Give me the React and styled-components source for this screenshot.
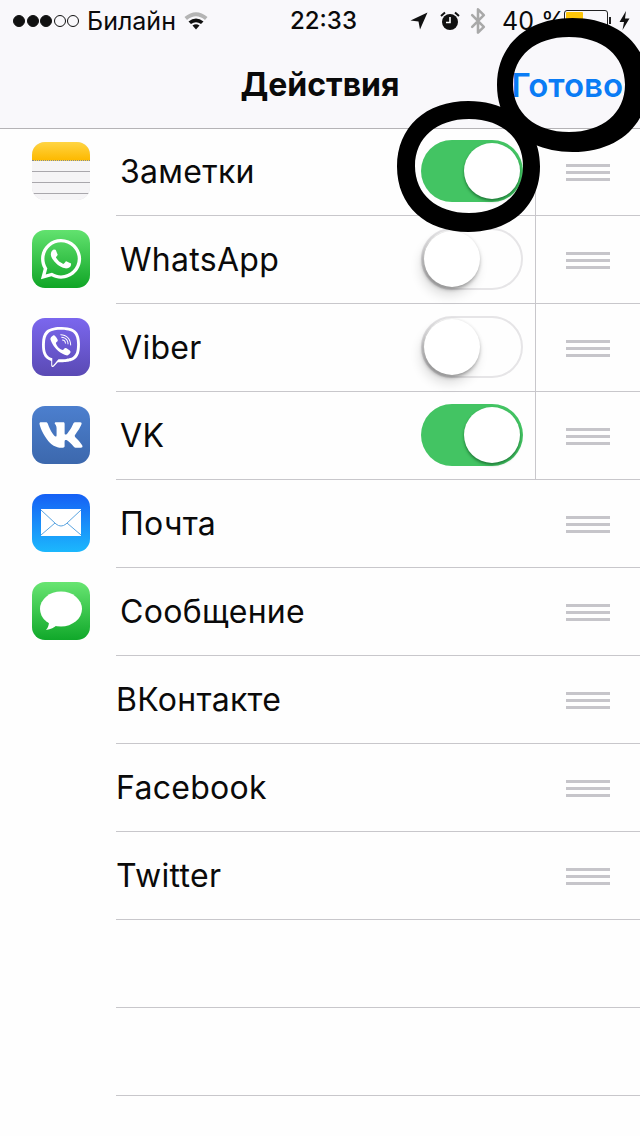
import React from "react";
import styled, { createGlobalStyle } from "styled-components";
import { FaWhatsapp, FaViber, FaVk } from "react-icons/fa";
import { Bluetooth } from "lucide-react";

const Global = createGlobalStyle`
  html, body { margin: 0; padding: 0; background: #fefefe; }
  body { font-family: Inter, "Liberation Sans", sans-serif; color: #0a0a0a; }
`;

const Page = styled.div`
  position: relative;
  width: 640px;
  height: 1136px;
  overflow: hidden;
  background: #fefefe;
`;

const Header = styled.header`
  height: 129px;
  box-sizing: border-box;
  background: #f9f8fb;
  border-bottom: 1px solid #b5b3b6;
  display: flex;
  flex-direction: column;
`;

const StatusBar = styled.div`
  height: 41px;
  display: flex;
  align-items: center;
  position: relative;
  font-size: 25px;
  letter-spacing: 0;
`;

const Dots = styled.div`
  display: flex;
  gap: 1.5px;
  margin-left: 13px;
  margin-top: 1px;
`;

const Dot = styled.span`
  width: 12px;
  height: 12px;
  border-radius: 50%;
  box-sizing: border-box;
  border: 1px solid #111;
  background: ${(p) => (p.$on ? "#111" : "transparent")};
`;

const Carrier = styled.span`
  margin-left: 8px;
  width: 85px;
  white-space: nowrap;
`;

const Glyph = styled.svg`
  flex: none;
  display: block;
  margin-left: ${(p) => p.$ml || 0}px;
`;

const Clock = styled.span`
  margin-left: 82px;
  width: 120px;
  font-weight: 500;
  white-space: nowrap;
  font-size: 24px;
`;

const Percent = styled.span`
  margin-left: 10px;
  width: 62px;
  white-space: nowrap;
`;

const Battery = styled.div`
  position: relative;
  width: 44px;
  height: 21px;
  box-sizing: border-box;
  border: 1px solid #222;
  border-radius: 3px;
  padding: 1px;
  flex: none;
`;

const BatteryFill = styled.div`
  width: 17px;
  height: 100%;
  background: #fdc60a;
  border-radius: 1px;
`;

const NavBar = styled.div`
  flex: 1;
  display: grid;
  grid-template-columns: 1fr auto 1fr;
  align-items: center;
`;

const Title = styled.h1`
  grid-column: 2;
  margin: 0;
  font-size: 32px;
  font-weight: 700;
  letter-spacing: 0;
`;

const Done = styled.button`
  justify-self: end;
  margin-right: 17px;
  padding: 0;
  border: 0;
  background: none;
  color: #0a7cf5;
  font: 600 33px Inter, "Liberation Sans", sans-serif;
`;

const List = styled.ul`
  list-style: none;
  margin: -1px 0 0;
  padding: 0;
`;

const Item = styled.li`
  height: 88px;
  box-sizing: border-box;
  display: flex;
  align-items: stretch;
`;

const IconCell = styled.div`
  width: 116px;
  flex: none;
  display: flex;
  align-items: center;
  padding-left: 32px;
  box-sizing: border-box;
  padding-bottom: 3px;
`;

const Body = styled.div`
  flex: 1;
  display: flex;
  align-items: stretch;
  border-bottom: 1px solid #c8c7cb;
`;

const Main = styled.div`
  flex: 1;
  display: flex;
  align-items: center;
  justify-content: space-between;
  padding-left: ${(p) => (p.$hasIcon ? 5 : 1)}px;
  padding-right: 12px;
  padding-bottom: 2px;
`;

const Label = styled.span`
  font-size: 32px;
  letter-spacing: 0.3px;
  margin-left: -1px;
  margin-top: 2px;
`;

const Grip = styled.div`
  width: 105px;
  flex: none;
  box-sizing: border-box;
  border-left: 1px solid ${(p) => (p.$divided ? "#c8c7cb" : "transparent")};
  display: flex;
  flex-direction: column;
  justify-content: center;
  gap: 4px;
  padding-left: 30px;
  padding-top: 1px;
`;

const GripBar = styled.span`
  width: 44px;
  height: 3px;
  background: #c6c5ca;
`;

const Switch = styled.div`
  width: 102px;
  height: 62px;
  box-sizing: border-box;
  border-radius: 31px;
  position: relative;
  background: ${(p) => (p.$on ? "#43c463" : "#fefefe")};
  border: ${(p) => (p.$on ? "none" : "2px solid #e6e5e7")};
`;

const Knob = styled.div`
  position: absolute;
  top: ${(p) => (p.$on ? 3 : 1)}px;
  left: ${(p) => (p.$on ? 43 : 1)}px;
  width: 56px;
  height: 56px;
  border-radius: 50%;
  background: #fff;
  box-shadow: ${(p) =>
    p.$on
      ? "0 2px 3px rgba(0,60,20,.55)"
      : "-1px 2px 4px rgba(0,0,0,.4), -3px 8px 12px rgba(0,0,0,.14)"};
`;

const AppTile = styled.div`
  width: 58px;
  height: 58px;
  border-radius: 13px;
  overflow: hidden;
  background: ${(p) => p.$bg};
  display: flex;
  align-items: center;
  justify-content: center;
  color: #fff;
`;

const NotesTop = styled.div`
  height: 18px;
  background: linear-gradient(#ffd544, #fdb900);
  border-bottom: 1px dotted #888;
`;

const NotesPaper = styled.div`
  height: 39px;
  background: repeating-linear-gradient(#f5f4f6 0, #f5f4f6 10px, #a9a7ac 10px, #a9a7ac 11px);
`;

const NotesTile = styled(AppTile)`
  display: block;
  box-shadow: inset 0 0 0 1px #e3e2e5;
  background: #f5f4f6;
`;

const Overlay = styled.svg`
  position: absolute;
  left: 0;
  top: 0;
  pointer-events: none;
`;

const NotesIcon = () => (
  <NotesTile>
    <NotesTop />
    <NotesPaper />
  </NotesTile>
);

const WhatsAppIcon = () => (
  <AppTile $bg="linear-gradient(#62e26f,#10a526)">
    <FaWhatsapp size={46} />
  </AppTile>
);

const ViberIcon = () => (
  <AppTile $bg="linear-gradient(#7b67ee,#5a4ab4)">
    <FaViber size={40} />
  </AppTile>
);

const VkIcon = () => (
  <AppTile $bg="linear-gradient(#4c7fce,#3c68ad)">
    <FaVk size={46} />
  </AppTile>
);

const MailIcon = () => (
  <AppTile $bg="linear-gradient(#1560f5,#1cb8fd)">
    <svg width="40" height="27" viewBox="0 0 40 27">
      <rect width="40" height="27" fill="#fff" />
      <path
        d="M0 1 L15 15 Q20 19 25 15 L40 1 M0 26 L14 14 M40 26 L26 14"
        fill="none"
        stroke="#5aa4e0"
        strokeWidth="1"
      />
    </svg>
  </AppTile>
);

const MessagesIcon = () => (
  <AppTile $bg="linear-gradient(#68e572,#10a82a)">
    <svg width="44" height="40" viewBox="0 0 44 40">
      <ellipse cx="22" cy="18" rx="21" ry="17.5" fill="#fff" />
      <path d="M10 30 Q10 36 7 39 Q14 38 18 34 Z" fill="#fff" />
    </svg>
  </AppTile>
);

const Signal = () => (
  <Dots>
    {[1, 1, 1, 0, 0].map((on, i) => (
      <Dot key={i} $on={!!on} />
    ))}
  </Dots>
);

const Wifi = () => (
  <Glyph $ml={12} width="24" height="19" viewBox="0 0 24 19">
    <path d="M0.5 6 Q12 -3.5 23.5 6 L21 9 Q12 1.5 3 9 Z" fill="#b4b4b4" />
    <path d="M4.5 10.5 Q12 4.5 19.5 10.5 L17 13 Q12 9.5 7 13 Z" fill="#111" />
    <path d="M8.5 14.5 Q12 12 15.5 14.5 L12 18.5 Z" fill="#111" />
  </Glyph>
);

const Arrow = () => (
  <Glyph width="18" height="18" viewBox="0 0 18 18">
    <path d="M0.5 8.5 L17.5 0.5 L10 17.5 L8.5 9.5 Z" fill="#111" />
  </Glyph>
);

const Alarm = () => (
  <Glyph $ml={12} width="20" height="20" viewBox="0 0 20 20">
    <circle cx="10" cy="11" r="8" fill="#111" />
    <path d="M10 6 V11.5 H6" fill="none" stroke="#fff" strokeWidth="1.6" />
    <path d="M1 5 L5 1.5 M19 5 L15 1.5" stroke="#111" strokeWidth="2" />
  </Glyph>
);

const Bolt = () => (
  <Glyph width="11" height="19" viewBox="0 0 11 19" $ml={8}>
    <path d="M7 0 L0.5 11 H5 L3.5 19 L10.5 7.5 H6 Z" fill="#111" />
  </Glyph>
);

const BatteryTip = styled.span`
  flex: none;
  width: 2px;
  height: 7px;
  margin-left: 1px;
  background: #222;
`;

const BtIcon = styled(Bluetooth)`
  flex: none;
  margin-left: 4px;
  color: #a9a9a9;
`;

const apps = [
  { name: "Заметки", icon: <NotesIcon />, toggle: true },
  { name: "WhatsApp", icon: <WhatsAppIcon />, toggle: false },
  { name: "Viber", icon: <ViberIcon />, toggle: false },
  { name: "VK", icon: <VkIcon />, toggle: true },
  { name: "Почта", icon: <MailIcon /> },
  { name: "Сообщение", icon: <MessagesIcon /> },
  { name: "ВКонтакте" },
  { name: "Facebook" },
  { name: "Twitter" },
  {},
  {},
];

const blob = (l, t, r, b) => {
  const cx = (l + r) / 2;
  const cy = (t + b) / 2;
  const kx = ((r - l) / 2) * 0.6;
  const ky = ((b - t) / 2) * 0.6;
  return `M${l} ${cy} C${l} ${cy - ky} ${cx - kx} ${t} ${cx} ${t} C${cx + kx} ${t} ${r} ${cy - ky} ${r} ${cy} C${r} ${cy + ky} ${cx + kx} ${b} ${cx} ${b} C${cx - kx} ${b} ${l} ${cy + ky} ${l} ${cy} Z`;
};

export default function App() {
  return (
    <Page>
      <Global />
      <Header>
        <StatusBar>
          <Signal />
          <Carrier>Билайн</Carrier>
          <Wifi />
          <Clock>22:33</Clock>
          <Arrow />
          <Alarm />
          <BtIcon size={28} strokeWidth={2.2} />
          <Percent>40 %</Percent>
          <Battery>
            <BatteryFill />
          </Battery>
          <BatteryTip />
          <Bolt />
        </StatusBar>
        <NavBar>
          <Title>Действия</Title>
          <Done>Готово</Done>
        </NavBar>
      </Header>
      <List>
        {apps.map((a, i) => (
          <Item key={i}>
            <IconCell>{a.icon}</IconCell>
            <Body>
              <Main $hasIcon={!!a.icon}>
                <Label>{a.name}</Label>
                {a.toggle !== undefined && (
                  <Switch $on={a.toggle}>
                    <Knob $on={a.toggle} />
                  </Switch>
                )}
              </Main>
              <Grip $divided={a.toggle !== undefined}>
                {a.name && (
                  <>
                    <GripBar />
                    <GripBar />
                    <GripBar />
                  </>
                )}
              </Grip>
            </Body>
          </Item>
        ))}
      </List>
      <Overlay width="640" height="1136" viewBox="0 0 640 1136">
        <path fillRule="evenodd" fill="#000" d={`${blob(497, 18, 648, 152)} ${blob(513, 37, 625, 132)}`} />
        <path fillRule="evenodd" fill="#000" d={`${blob(397, 101, 540, 232)} ${blob(415, 119, 523, 213)}`} />
      </Overlay>
    </Page>
  );
}
